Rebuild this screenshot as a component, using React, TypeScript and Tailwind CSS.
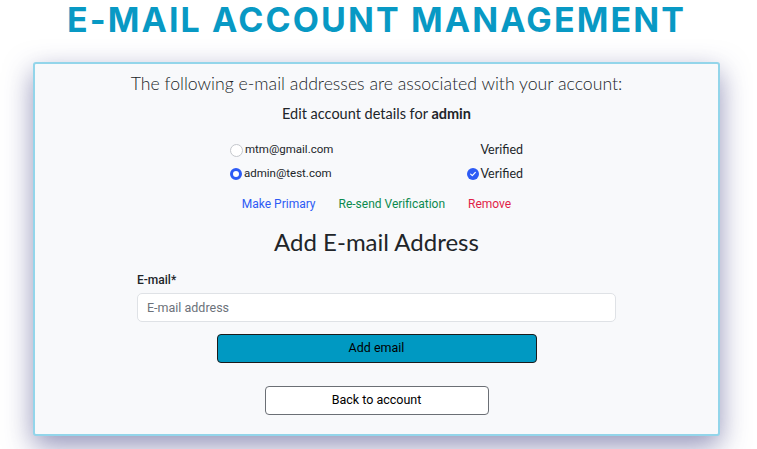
import { FC } from "react";

const emails = [
  { address: "mtm@gmail.com", primary: false, verified: true, selected: false },
  { address: "admin@test.com", primary: true, verified: true, selected: true },
];

const Radio: FC<{ checked: boolean }> = ({ checked }) =>
  checked ? (
    <span className="w-[12px] h-[12px] rounded-full border-[3.5px] border-[#2d5bf5] bg-white shrink-0" />
  ) : (
    <span className="w-[13px] h-[13px] rounded-full border border-[#c4c7cc] bg-white shrink-0" />
  );

const Check: FC = () => (
  <span className="w-[12px] h-[12px] rounded-full bg-[#2d5bf5] flex items-center justify-center shrink-0">
    <svg viewBox="0 0 12 12" className="w-[8px] h-[8px]">
      <path d="M2.5 6.2 L5 8.5 L9.5 3.5" fill="none" stroke="white" strokeWidth="1.8" strokeLinecap="round" strokeLinejoin="round" />
    </svg>
  </span>
);

const App: FC = () => {
  return (
    <div className="min-h-screen bg-white flex flex-col items-center font-['Lato',sans-serif] text-[#212529]">
      <h1 className="mr-[4px] h-[40px] leading-[40px] text-[34px] font-bold tracking-[0.062em] text-[#0899c4] font-['Inter',sans-serif]">
        E-MAIL ACCOUNT MANAGEMENT
      </h1>

      <div className="mr-[4px] mt-[22px] w-[687px] h-[374px] border-2 border-[#93d5ea] rounded-[3px] bg-[#f8f9fb] shadow-[0_10px_28px_rgba(60,60,130,0.55)] flex flex-col items-center pt-[8px]">
        <p className="text-[17.7px] leading-[24px] font-light">
          The following e-mail addresses are associated with your account:
        </p>
        <p className="mt-[8px] text-[14.5px] leading-[20px]">
          Edit account details for <span className="font-bold">admin</span>
        </p>

        <div className="mt-[17px] w-[293px] flex flex-col gap-[6px]">
          {emails.map((e) => (
            <div key={e.address} className="flex items-center justify-between h-[18px]">
              <label className="flex items-center gap-[2px] font-['Roboto',sans-serif] text-[11.5px]">
                <Radio checked={e.selected} />
                {e.address}
              </label>
              <span className="flex items-center gap-[2px] text-[12.5px]">
                {e.primary && <Check />}
                Verified
              </span>
            </div>
          ))}
        </div>

        <div className="mt-[12px] flex items-center gap-[23px] font-['Roboto',sans-serif] text-[12px] leading-[18px]">
          <a className="text-[#2d5bf5]">Make Primary</a>
          <a className="text-[#0b8a4f]">Re-send Verification</a>
          <a className="text-[#e11d48]">Remove</a>
        </div>

        <h2 className="mt-[14px] text-[24px] leading-[30px]">Add E-mail Address</h2>

        <div className="mt-[14px] w-[479px] flex flex-col">
          <label className="text-[12px] leading-[18px] font-['Roboto',sans-serif] font-medium">E-mail*</label>
          <input
            type="email"
            placeholder="E-mail address"
            className="mt-[4px] h-[29px] w-full rounded-[5px] border border-[#dfe2e6] bg-white px-[9px] text-[12.5px] font-['Roboto',sans-serif] placeholder:text-[#6c727a] outline-none"
          />
        </div>

        <button className="mt-[12px] w-[320px] h-[29px] rounded-[4px] border-[1.5px] border-[#1b1b1b] bg-[#0099c2] text-[12.5px] font-['Roboto',sans-serif] text-black">
          Add email
        </button>

        <button className="mt-[23px] w-[224px] h-[29px] rounded-[4px] border border-[#6b6f75] bg-white text-[12.5px] font-['Roboto',sans-serif] text-black">
          Back to account
        </button>
      </div>
    </div>
  );
};

export default App;
